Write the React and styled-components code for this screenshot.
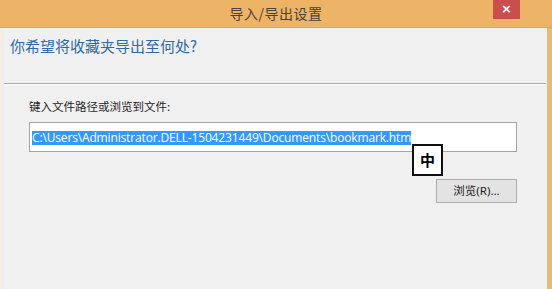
import React from 'react';
import styled, { createGlobalStyle } from 'styled-components';

const GlobalStyle = createGlobalStyle`
  html, body {
    margin: 0;
    padding: 0;
    background: #f0f0f0;
  }
  body {
    font-family: "Noto Sans", "Noto Sans CJK SC", sans-serif;
  }
`;

const Window = styled.div`
  width: 552px;
  height: 289px;
  display: flex;
  flex-direction: column;
  overflow: hidden;
  background: #f0f0f0;
`;

const TitleBar = styled.div`
  height: 27px;
  flex-shrink: 0;
  display: grid;
  grid-template-columns: 1fr auto 1fr;
  align-items: start;
  background: #edb468;
  border-bottom: 1px solid #d9a55c;
`;

const Title = styled.div`
  grid-column: 2;
  padding-top: 4px;
  font-family: "Noto Sans CJK SC", sans-serif;
  font-size: 14px;
  line-height: 19px;
  color: #4b4138;
  letter-spacing: 0.5px;
`;

const CloseButton = styled.div`
  grid-column: 3;
  justify-self: end;
  margin-right: 32px;
  width: 27px;
  height: 19px;
  background: #c8504c;
  color: #fff;
  font-family: "DejaVu Sans", sans-serif;
  font-size: 13px;
  font-weight: bold;
  line-height: 18px;
  text-align: center;
`;

const Body = styled.div`
  flex: 1;
  display: flex;
`;

const LeftEdge = styled.div`
  width: 4px;
  background: linear-gradient(to right, #fbece0, #e9eef3);
`;

const RightEdge = styled.div`
  width: 5px;
  background: #e4bc7a;
  border-left: 1px solid #f6f1e8;
`;

const Content = styled.div`
  flex: 1;
  display: flex;
  flex-direction: column;
`;

const Header = styled.div`
  height: 55px;
  padding: 8px 0 0 6px;
  box-sizing: border-box;
`;

const Heading = styled.div`
  font-family: "Noto Sans CJK SC", sans-serif;
  font-size: 15px;
  line-height: 20px;
  color: #2f6aa6;
`;

const Divider = styled.div`
  height: 1px;
  background: #a9a9a9;
  border-bottom: 1px solid #ffffff;
`;

const Main = styled.div`
  padding: 13px 29px 0 25px;
  display: flex;
  flex-direction: column;
`;

const Label = styled.div`
  font-family: "Noto Sans CJK SC", sans-serif;
  font-size: 11.5px;
  line-height: 16px;
  color: #1e1e1e;
`;

const Field = styled.div`
  position: relative;
  margin-top: 8px;
  height: 30px;
  box-sizing: border-box;
  background: #fff;
  border: 1px solid #a5a5a5;
  padding: 2px 2px 0;
`;

const Selected = styled.span`
  background: #3399ff;
  color: #fff;
  font-family: "Open Sans", sans-serif;
  font-size: 12px;
  line-height: 14px;
  display: inline-block;
  letter-spacing: -0.15px;
  white-space: nowrap;
`;

const ImeBox = styled.div`
  position: absolute;
  left: 382px;
  top: 21px;
  width: 31px;
  height: 32px;
  box-sizing: border-box;
  border: 2px solid #111;
  background: #fff;
  font-family: "Noto Sans CJK SC", sans-serif;
  font-weight: bold;
  font-size: 15px;
  line-height: 28px;
  text-align: center;
  color: #000;
`;

const ButtonRow = styled.div`
  margin-top: 27px;
  display: flex;
  justify-content: flex-end;
  padding-right: 0;
`;

const Button = styled.div`
  width: 81px;
  height: 24px;
  box-sizing: border-box;
  border: 1px solid #adadad;
  background: #e3e3e3;
  font-family: "Noto Sans", "Noto Sans CJK SC", sans-serif;
  font-size: 11.5px;
  line-height: 22px;
  text-align: center;
  color: #222;
`;

export default function App() {
  return (
    <>
      <GlobalStyle />
      <Window>
        <TitleBar>
          <Title>导入/导出设置</Title>
          <CloseButton>×</CloseButton>
        </TitleBar>
        <Body>
          <LeftEdge />
          <Content>
            <Header>
              <Heading>你希望将收藏夹导出至何处?</Heading>
            </Header>
            <Divider />
            <Main>
              <Label>键入文件路径或浏览到文件:</Label>
              <Field>
                <Selected>C:\Users\Administrator.DELL-1504231449\Documents\bookmark.htm</Selected>
                <ImeBox>中</ImeBox>
              </Field>
              <ButtonRow>
                <Button>浏览(R)...</Button>
              </ButtonRow>
            </Main>
          </Content>
          <RightEdge />
        </Body>
      </Window>
    </>
  );
}
